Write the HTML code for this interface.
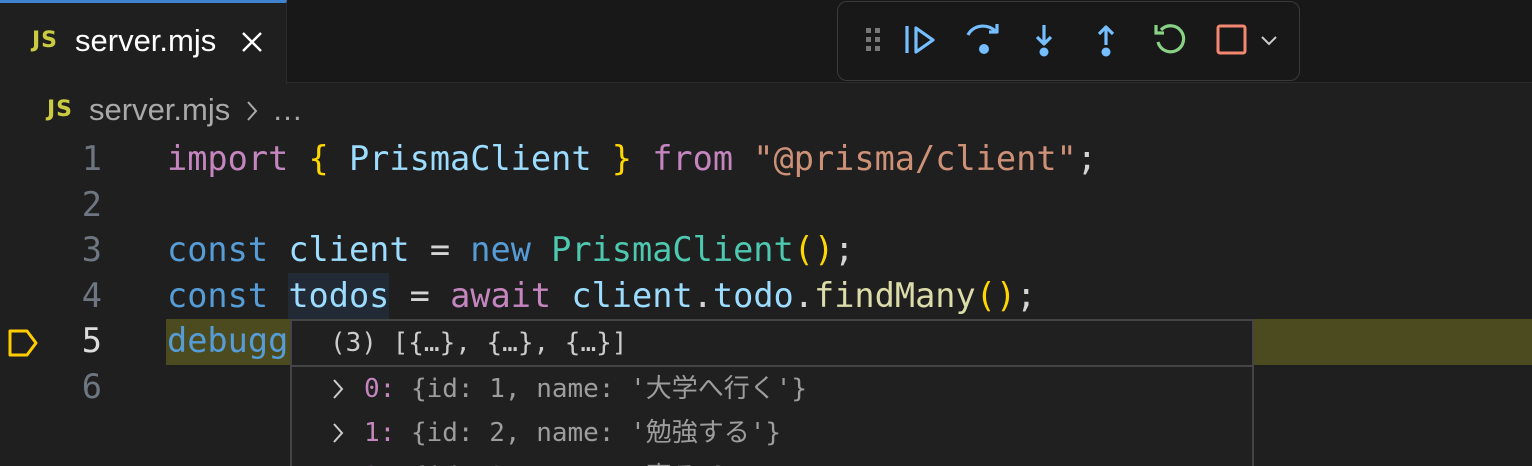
<!DOCTYPE html>
<html><head><meta charset="utf-8"><style>
*{margin:0;padding:0;box-sizing:border-box}
html{width:1532px;height:466px;overflow:hidden}
body{width:1532px;height:466px;overflow:hidden;background:#1f1f1f;position:relative;font-family:"Liberation Sans","Noto Sans CJK JP",sans-serif}
.abs{position:absolute}
.tabbar{left:0;top:0;width:1532px;height:83px;background:#181818;border-bottom:1px solid #2b2b2b}
.tab{left:0;top:0;width:287px;height:84px;background:#1f1f1f;border-top:3px solid #3f83d0;border-right:1px solid #2b2b2b}
.js{color:#cbcb41;font-weight:bold;font-family:"DejaVu Sans",sans-serif;letter-spacing:1px}
.code{font-family:"DejaVu Sans Mono","Liberation Mono",monospace;font-size:33.6px;white-space:pre;line-height:45.6px}
.ln{left:40px;width:62px;text-align:right;color:#6e7681}
.k{color:#569cd6}.p{color:#c586c0}.v{color:#9cdcfe}.c{color:#4ec9b0}.s{color:#ce9178}.f{color:#dcdcaa}.b{color:#ffd700}.w{color:#d4d4d4}
.hover{left:290px;top:319px;width:964px;height:147px;overflow:hidden;background:#202020;border:2px solid #454545;border-bottom:none;font-family:"DejaVu Sans Mono","Liberation Mono","Noto Sans CJK JP",monospace;font-size:26px;white-space:pre;color:#ccc}
.row{position:absolute;left:72px;height:44px;line-height:44px}
.chev{position:absolute;left:38px}
.g{color:#9d9d9d}
</style></head><body>
<div class="abs tabbar"></div>
<div class="abs tab"></div>
<div class="abs js" style="left:32px;top:28px;font-size:22px">JS</div>
<div class="abs" style="left:75px;top:23px;font-size:31px;color:#fff">server.mjs</div>
<svg class="abs" style="left:240px;top:30px" width="24" height="24"><path d="M3 3L21 21M21 3L3 21" stroke="#fff" stroke-width="2.4"/></svg>

<div class="abs" style="left:837px;top:1px;width:463px;height:80px;background:#181818;border:1.5px solid #3a3a3a;border-radius:10px"></div>
<svg class="abs" style="left:860px;top:20px" width="430" height="40">
<g fill="#777"><rect x="6" y="8" width="5" height="5"/><rect x="15" y="8" width="5" height="5"/><rect x="6" y="17" width="5" height="5"/><rect x="15" y="17" width="5" height="5"/><rect x="6" y="26" width="5" height="5"/><rect x="15" y="26" width="5" height="5"/></g>
<g stroke="#75beff" stroke-width="3.2" fill="none" stroke-linejoin="round">
<path d="M47 6V33M56 8L73 20L56 32Z"/>
<path d="M108 15A16 14 0 0 1 136 12M137 4V12H129"/>
<path d="M184 5V24M177 17L184 24L191 17"/>
<path d="M246 25V7M239 14L246 7L253 14"/>
</g>
<g fill="#75beff"><circle cx="124" cy="29" r="5"/><circle cx="184" cy="32" r="4.5"/><circle cx="246" cy="32" r="4.5"/></g>
<path d="M301 10A13 13 0 1 1 298 22M296 5V13H304" stroke="#89d185" stroke-width="3.2" fill="none"/>
<rect x="358" y="6" width="27" height="27" rx="2" stroke="#f48771" stroke-width="3" fill="none"/>
<path d="M402 17L409 24L416 17" stroke="#ccc" stroke-width="2" fill="none"/>
</svg>

<div class="abs js" style="left:47px;top:97px;font-size:22px">JS</div>
<div class="abs" style="left:89px;top:92px;font-size:31px;color:#a9a9a9">server.mjs</div>
<svg class="abs" style="left:244px;top:99px" width="16" height="24"><path d="M4 3L12 12L4 21" stroke="#a9a9a9" stroke-width="2" fill="none"/></svg>
<div class="abs" style="left:272px;top:92px;font-size:31px;color:#a9a9a9">…</div>

<div class="abs" style="left:166px;top:319px;width:1366px;height:46px;background:#4b4b1f"></div>
<div class="abs" style="left:288px;top:273px;width:101px;height:46px;background:#212a35"></div>
<svg class="abs" style="left:6px;top:328px" width="34" height="30"><path d="M4 3H21L30 15L21 27H4Z" stroke="#ffcc00" stroke-width="3" fill="none" stroke-linejoin="round"/></svg>

<div class="abs code ln" style="top:136px">1
2
3
4
<span style="color:#ddd">5</span>
6</div>
<div class="abs code" style="left:167px;top:136px"><span class="p">import</span> <span class="b">{</span> <span class="v">PrismaClient</span> <span class="b">}</span> <span class="p">from</span> <span class="s">"@prisma/client"</span><span class="w">;</span>

<span class="k">const</span> <span class="v">client</span> <span class="w">=</span> <span class="k">new</span> <span class="c">PrismaClient</span><span class="b">()</span><span class="w">;</span>
<span class="k">const</span> <span class="v">todos</span> <span class="w">=</span> <span class="p">await</span> <span class="v">client</span><span class="w">.</span><span class="v">todo</span><span class="w">.</span><span class="f">findMany</span><span class="b">()</span><span class="w">;</span>
<span class="k">debugg</span></div>

<div class="abs hover">
<div class="row" style="top:0;left:38px">(3) [{…}, {…}, {…}]</div>
<div style="position:absolute;left:0;right:0;top:44px;height:2px;background:#454545"></div>
<svg class="chev" style="top:56px" width="16" height="24"><path d="M4 3L12 12L4 21" stroke="#ccc" stroke-width="2" fill="none"/></svg>
<div class="row" style="top:46px"><span class="p">0:</span> <span class="g">{id: 1, name: '大学へ行く'}</span></div>
<svg class="chev" style="top:100px" width="16" height="24"><path d="M4 3L12 12L4 21" stroke="#ccc" stroke-width="2" fill="none"/></svg>
<div class="row" style="top:90px"><span class="p">1:</span> <span class="g">{id: 2, name: '勉強する'}</span></div>
<svg class="chev" style="top:144px" width="16" height="24"><path d="M4 3L12 12L4 21" stroke="#ccc" stroke-width="2" fill="none"/></svg>
<div class="row" style="top:134px"><span class="p">2:</span> <span class="g">{id: 3, name: '寝る'}</span></div>
</div>
</body></html>
